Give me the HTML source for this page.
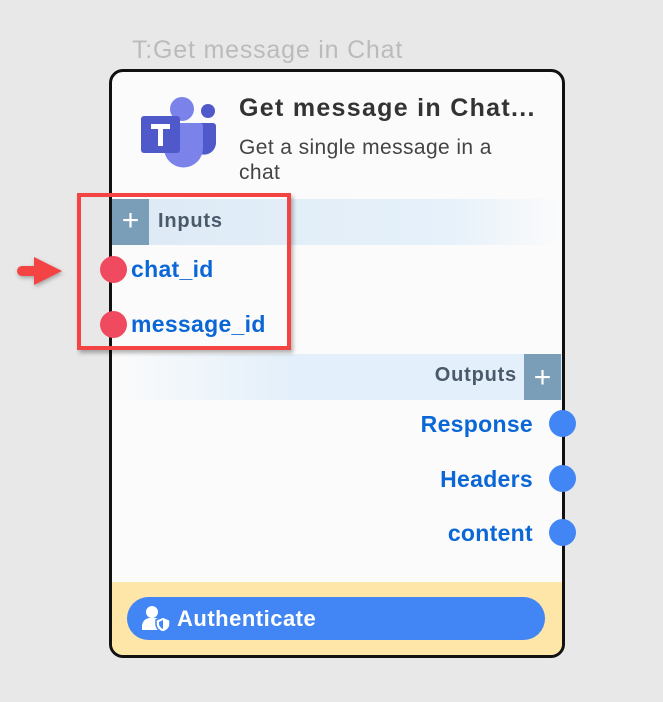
<!DOCTYPE html>
<html><head><style>
body{margin:0;width:663px;height:702px;background:#e8e8e8;position:relative;overflow:hidden;font-family:"Liberation Sans",sans-serif}
.abs{position:absolute}
.card{left:109px;top:69px;width:450px;height:583px;border:3px solid #111;border-radius:14px;background:#fbfbfb;overflow:hidden}
.lbl{font-weight:bold;color:#0b67d6;font-size:23px;letter-spacing:0.3px}
.rdot{width:27px;height:27px;border-radius:50%;background:#ef4a5f}
.bdot{width:27px;height:27px;border-radius:50%;background:#4285f4}
</style></head><body>
<div class="abs" style="left:132px;top:36px;font-size:25px;letter-spacing:0.8px;color:#bbb">T:Get message in Chat</div>
<div class="abs card">
  <svg class="abs" style="left:28px;top:25px" width="80" height="75" viewBox="140 94 80 75">
    <circle cx="208" cy="108" r="7" fill="#5059c9"/>
    <path d="M198 120h15a3 3 0 0 1 3 3v17a12 12 0 0 1-18 10z" fill="#5059c9"/>
    <circle cx="182" cy="106" r="12" fill="#7b83eb"/>
    <path d="M164 120h36a3 3 0 0 1 3 3v22a19 19 0 0 1-39 0z" fill="#7b83eb"/>
    <rect x="141" y="113" width="39" height="37" rx="3" fill="#5059c9"/>
    <path d="M151 121h19v5h-7v17h-5v-17h-7z" fill="#fff"/>
  </svg>
  <div class="abs" style="left:127px;top:22px;font-size:25px;letter-spacing:1.3px;font-weight:bold;color:#333">Get message in Chat...</div>
  <div class="abs" style="left:127px;top:63px;font-size:21px;letter-spacing:0.4px;color:#444;line-height:25px;width:285px">Get a single message in a chat</div>
  <div class="abs" style="left:0;top:127px;width:450px;height:46px;background:linear-gradient(90deg,#dde9f5 0%,#e6f1fa 75%,#fbfbfb 100%)"></div>
  <div class="abs" style="left:0;top:127px;width:37px;height:46px;background:#7a9db8;color:#fff;font-size:30px;text-align:center;line-height:44px">+</div>
  <div class="abs" style="left:46px;top:138px;font-size:20px;letter-spacing:0.8px;font-weight:bold;color:#4a5a6a">Inputs</div>
  <div class="abs lbl" style="left:19px;top:184px">chat_id</div>
  <div class="abs lbl" style="left:19px;top:239px">message_id</div>
  <div class="abs" style="left:0;top:282px;width:451px;height:46px;background:linear-gradient(90deg,#fbfbfb 0%,#e3effa 40%,#e3effa 100%)"></div>
  <div class="abs" style="left:412px;top:282px;width:37px;height:46px;background:#7a9db8;color:#fff;font-size:30px;text-align:center;line-height:48px">+</div>
  <div class="abs" style="right:45px;top:292px;font-size:20px;letter-spacing:0.8px;font-weight:bold;color:#4a5a6a">Outputs</div>
  <div class="abs lbl" style="right:29px;top:339px">Response</div>
  <div class="abs lbl" style="right:29px;top:394px">Headers</div>
  <div class="abs lbl" style="right:29px;top:448px">content</div>
  <div class="abs" style="left:0;top:510px;width:450px;height:73px;background:#fee6a8"></div>
  <div class="abs" style="left:15px;top:525px;width:418px;height:43px;border-radius:22px;background:#4285f4"></div>
  <svg class="abs" style="left:30px;top:533px" width="30" height="27" viewBox="0 0 30 27">
    <circle cx="10" cy="7" r="6" fill="#fff"/>
    <path d="M0 25v-4a8 8 0 0 1 8-8h5a8 8 0 0 1 5 2v10z" fill="#fff"/>
    <path d="M21 12l7 3v4c0 4-3 7-7 8c-4-1-7-4-7-8v-4z" fill="#fff" stroke="#4285f4" stroke-width="1.5"/>
    <path d="M21 15v9c-2-1-4-3-4-5v-2z" fill="#4285f4"/>
  </svg>
  <div class="abs" style="left:65px;top:534px;font-size:22px;letter-spacing:0.5px;font-weight:bold;color:#fff">Authenticate</div>
</div>
<div class="abs rdot" style="left:100px;top:256px"></div>
<div class="abs rdot" style="left:100px;top:311px"></div>
<div class="abs bdot" style="left:549px;top:410px"></div>
<div class="abs bdot" style="left:549px;top:465px"></div>
<div class="abs bdot" style="left:549px;top:519px"></div>
<div class="abs" style="left:77px;top:193px;width:206px;height:149px;border:4px solid #f44343;box-shadow:2px 3px 4px rgba(0,0,0,.3)"></div>
<svg class="abs" style="left:15px;top:256px;filter:drop-shadow(1px 2px 2px rgba(0,0,0,.3))" width="50" height="30" viewBox="15 256 50 30">
  <path d="M22 266h12v-9l28 14-28 14v-9h-12a5 5 0 0 1 0-10z" fill="#f44343"/>
</svg>
</body></html>
